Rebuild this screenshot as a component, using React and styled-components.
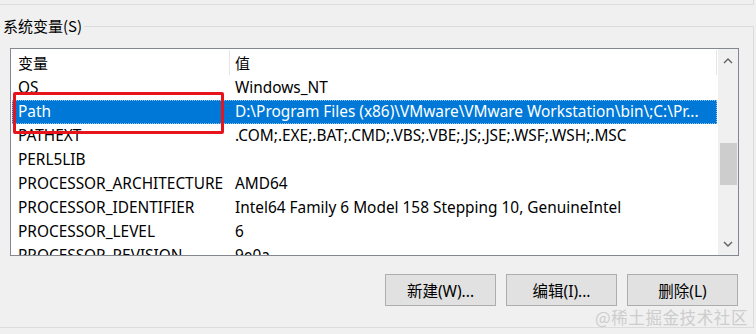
import React from 'react';
import styled, { createGlobalStyle } from 'styled-components';

const Global = createGlobalStyle`
  html, body { margin: 0; padding: 0; background: #f0f0f0; }
  body {
    width: 756px; height: 334px; overflow: hidden;
    font-family: "Noto Sans", "Noto Sans CJK SC", sans-serif;
    font-size: 15.4px; color: #000;
  }
`;

const Page = styled.div`
  position: relative;
  width: 756px;
  height: 334px;
`;

const PrevGroupEdge = styled.div`
  width: 754px;
  height: 5px;
  box-sizing: border-box;
  border-bottom: 1px solid #dcdcdc;
  border-right: 1px solid #dcdcdc;
`;

const Group = styled.fieldset`
  margin: 11px 0 0 0;
  width: 754px;
  height: 312px;
  box-sizing: border-box;
  border: 1px solid #dcdcdc;
  border-left: none;
  padding: 0;
  min-inline-size: 0;
`;

const Legend = styled.legend`
  padding: 0 2px;
  margin-left: 1px;
  font-size: 15px;
  line-height: 20px;
  font-family: "Noto Sans CJK SC", sans-serif;
`;

const Content = styled.div`
  padding: 12px 14px 0 10px;
  display: flex;
  flex-direction: column;
`;

const ListBox = styled.div`
  height: 208px;
  box-sizing: border-box;
  border: 1px solid #828790;
  background: #fff;
  display: flex;
`;

const Main = styled.div`
  flex: 1;
  display: flex;
  flex-direction: column;
  overflow: hidden;
  padding-right: 1px;
`;

const HeaderRow = styled.div`
  height: 27px;
  flex: none;
  display: grid;
  grid-template-columns: 219px 1fr;
  align-items: stretch;
`;

const HeaderCell = styled.div`
  display: flex;
  align-items: center;
  padding-left: ${p => (p.$first ? 7 : 5)}px;
  border-right: 1px solid #e5e5e5;
  margin: 1px 0 1px 0;
  font-family: "Noto Sans CJK SC", sans-serif;
  font-size: 15px;
`;

const Body = styled.div`
  flex: 1;
  overflow: hidden;
`;

const Row = styled.div`
  height: 24px;
  display: grid;
  grid-template-columns: 219px 1fr;
  align-items: center;
  line-height: 24px;
  background: ${p => (p.$selected ? '#0078d7' : 'transparent')};
  color: ${p => (p.$selected ? '#fff' : '#000')};
  margin-left: 1px;
  box-sizing: border-box;
  ${p => (p.$selected ? 'outline: 1px dotted rgba(255,255,255,0.55); outline-offset: -1px;' : '')}
`;

const Cell = styled.div`
  padding-left: ${p => (p.$first ? 6 : 4)}px;
  white-space: nowrap;
  overflow: hidden;
`;

const ScrollBar = styled.div`
  width: 20px;
  flex: none;
  background: #f0f0f0;
  display: flex;
  flex-direction: column;
  align-items: center;
`;

const Arrow = styled.div`
  height: 23px;
  width: 100%;
  display: flex;
  align-items: center;
  justify-content: center;
  flex: none;
`;

const Track = styled.div`
  flex: 1;
  width: 100%;
  display: flex;
  flex-direction: column;
  align-items: center;
`;

const Thumb = styled.div`
  margin-top: ${p => p.$offset}px;
  width: 17px;
  height: 42px;
  background: #cdcdcd;
`;

const ButtonRow = styled.div`
  margin-top: 18px;
  display: flex;
  justify-content: flex-end;
  gap: 10px;
  padding-right: 1px;
`;

const Button = styled.button`
  width: 111px;
  height: 32px;
  box-sizing: border-box;
  background: #e1e1e1;
  border: 1px solid #adadad;
  font-family: "Noto Sans", "Noto Sans CJK SC", sans-serif;
  font-size: 15.5px;
  color: #000;
  padding: 0;
`;

const RedMark = styled.div`
  position: absolute;
  left: 13px;
  top: 92px;
  width: 211px;
  height: 42px;
  box-sizing: border-box;
  border: 3.5px solid #e8141c;
  border-radius: 2px;
`;

const Watermark = styled.div`
  position: absolute;
  right: 8px;
  bottom: 5px;
  font-family: "Noto Sans CJK SC", sans-serif;
  font-size: 16.5px;
  color: #cdcdcd;
  letter-spacing: 0.6px;
`;

const Chevron = ({ up }) => (
  <svg width="10" height="6" viewBox="0 0 10 6">
    <path
      d={up ? 'M1 5 L5 1 L9 5' : 'M1 1 L5 5 L9 1'}
      fill="none"
      stroke="#606060"
      strokeWidth="1.4"
    />
  </svg>
);

const rows = [
  ['OS', 'Windows_NT'],
  ['Path', 'D:\\Program Files (x86)\\VMware\\VMware Workstation\\bin\\;C:\\Pr...', true],
  ['PATHEXT', '.COM;.EXE;.BAT;.CMD;.VBS;.VBE;.JS;.JSE;.WSF;.WSH;.MSC'],
  ['PERL5LIB', ''],
  ['PROCESSOR_ARCHITECTURE', 'AMD64'],
  ['PROCESSOR_IDENTIFIER', 'Intel64 Family 6 Model 158 Stepping 10, GenuineIntel'],
  ['PROCESSOR_LEVEL', '6'],
  ['PROCESSOR_REVISION', '9e0a'],
];

export default function App() {
  return (
    <Page>
      <Global />
      <PrevGroupEdge />
      <Group>
        <Legend>系统变量(S)</Legend>
        <Content>
          <ListBox>
            <Main>
              <HeaderRow>
                <HeaderCell $first>变量</HeaderCell>
                <HeaderCell>值</HeaderCell>
              </HeaderRow>
              <Body>
                {rows.map(([n, v, sel]) => (
                  <Row key={n} $selected={sel}>
                    <Cell $first>{n}</Cell>
                    <Cell>{v}</Cell>
                  </Row>
                ))}
              </Body>
            </Main>
            <ScrollBar>
              <Arrow><Chevron up /></Arrow>
              <Track><Thumb $offset={71} /></Track>
              <Arrow><Chevron /></Arrow>
            </ScrollBar>
          </ListBox>
          <ButtonRow>
            <Button>新建(W)...</Button>
            <Button>编辑(I)...</Button>
            <Button>删除(L)</Button>
          </ButtonRow>
        </Content>
      </Group>
      <RedMark />
      <Watermark>@稀土掘金技术社区</Watermark>
    </Page>
  );
}
